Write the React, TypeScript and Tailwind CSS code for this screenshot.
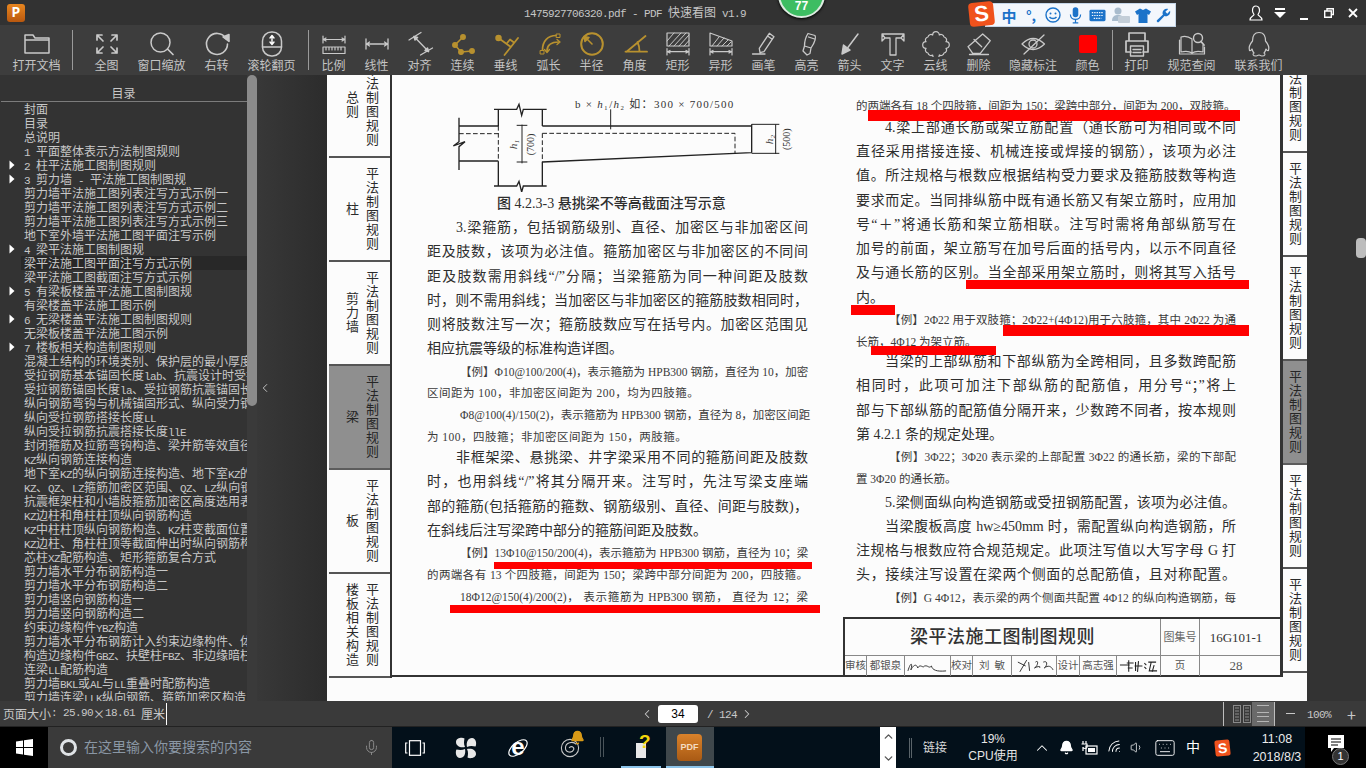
import type { ReactNode } from 'react';
import { Bell, ChevronDown, ChevronLeft, ChevronRight, ChevronUp, Keyboard, Mic, Volume1, Wifi } from 'lucide-react';

const tocRows: [string, boolean?, boolean?][] = [
  ['封面'], ['目录'], ['总说明'], ['1 平面整体表示方法制图规则'],
  ['2 柱平法施工图制图规则', true], ['3 剪力墙 - 平法施工图制图规', true],
  ['剪力墙平法施工图列表注写方式示例一'], ['剪力墙平法施工图列表注写方式示例二'], ['剪力墙平法施工图列表注写方式示例三'],
  ['地下室外墙平法施工图平面注写示例'], ['4 梁平法施工图制图规', true], ['梁平法施工图平面注写方式示例', false, true],
  ['梁平法施工图截面注写方式示例'], ['5 有梁板楼盖平法施工图制图规', true], ['有梁楼盖平法施工图示例'],
  ['6 无梁楼盖平法施工图制图规则', true], ['无梁板楼盖平法施工图示例'], ['7 楼板相关构造制图规则', true],
  ['混凝土结构的环境类别、保护层的最小厚度'], ['受拉钢筋基本锚固长度lab、抗震设计时受拉钢筋'], ['受拉钢筋锚固长度la、受拉钢筋抗震锚固长度'],
  ['纵向钢筋弯钩与机械锚固形式、纵向受力钢筋'], ['纵向受拉钢筋搭接长度LL'], ['纵向受拉钢筋抗震搭接长度llE'],
  ['封闭箍筋及拉筋弯钩构造、梁并筋等效直径'], ['KZ纵向钢筋连接构造'], ['地下室KZ的纵向钢筋连接构造、地下室KZ的'],
  ['KZ、QZ、LZ箍筋加密区范围、QZ、LZ纵向钢筋'], ['抗震框架柱和小墙肢箍筋加密区高度选用表'], ['KZ边柱和角柱柱顶纵向钢筋构造'],
  ['KZ中柱柱顶纵向钢筋构造、KZ柱变截面位置'], ['KZ边柱、角柱柱顶等截面伸出时纵向钢筋构造'], ['芯柱XZ配筋构造、矩形箍筋复合方式'],
  ['剪力墙水平分布钢筋构造一'], ['剪力墙水平分布钢筋构造二'], ['剪力墙竖向钢筋构造一'], ['剪力墙竖向钢筋构造二'],
  ['约束边缘构件YBZ构造'], ['剪力墙水平分布钢筋计入约束边缘构件、体'], ['构造边缘构件GBZ、扶壁柱FBZ、非边缘暗柱'],
  ['连梁LL配筋构造'], ['剪力墙BKL或AL与LL重叠时配筋构造'], ['剪力墙连梁LLK纵向钢筋、箍筋加密区构造'],
];

// l = body text, s = small example text, w = small text set wider; then first-line indent, unjustified, extra classes
type Line = [string, 'l' | 's' | 'w', boolean?, boolean?, string?];

const leftLines: Line[] = [
  ['3.梁箍筋，包括钢筋级别、直径、加密区与非加密区间', 'l', true],
  ['距及肢数，该项为必注值。箍筋加密区与非加密区的不同间', 'l'],
  ['距及肢数需用斜线“/”分隔；当梁箍筋为同一种间距及肢数', 'l'],
  ['时，则不需用斜线；当加密区与非加密区的箍筋肢数相同时，', 'l'],
  ['则将肢数注写一次；箍筋肢数应写在括号内。加密区范围见', 'l'],
  ['相应抗震等级的标准构造详图。', 'l', false, true],
  ['【例】Φ10@100/200(4)，表示箍筋为 HPB300 钢筋，直径为 10，加密', 's', true],
  ['区间距为 100，非加密区间距为 200，均为四肢箍。', 'w', false, true],
  ['Φ8@100(4)/150(2)，表示箍筋为 HPB300 钢筋，直径为 8，加密区间距', 's', true],
  ['为 100，四肢箍；非加密区间距为 150，两肢箍。', 'w', false, true],
  ['非框架梁、悬挑梁、井字梁采用不同的箍筋间距及肢数', 'l', true, false, '-mt-[2.5px]'],
  ['时，也用斜线“/”将其分隔开来。注写时，先注写梁支座端', 'l'],
  ['部的箍筋(包括箍筋的箍数、钢筋级别、直径、间距与肢数)，', 'l'],
  ['在斜线后注写梁跨中部分的箍筋间距及肢数。', 'l', false, true],
  ['【例】13Φ10@150/200(4)，表示箍筋为 HPB300 钢筋，直径为 10；梁', 's', true],
  ['的两端各有 13 个四肢箍，间距为 150；梁跨中部分间距为 200，四肢箍。', 's'],
  ['18Φ12@150(4)/200(2)，  表示箍筋为 HPB300 钢筋，  直径为 12；梁', 's', true],
];

const rightLines: Line[] = [
  ['的两端各有 18 个四肢箍，间距为 150；梁跨中部分，间距为 200，双肢箍。', 's', false, true, 'mt-[2px] -mb-[2px]'],
  ['4.梁上部通长筋或架立筋配置（通长筋可为相同或不同', 'l', true],
  ['直径采用搭接连接、机械连接或焊接的钢筋），该项为必注', 'l'],
  ['值。所注规格与根数应根据结构受力要求及箍筋肢数等构造', 'l'],
  ['要求而定。当同排纵筋中既有通长筋又有架立筋时，应用加', 'l'],
  ['号“＋”将通长筋和架立筋相联。注写时需将角部纵筋写在', 'l'],
  ['加号的前面，架立筋写在加号后面的括号内，以示不同直径', 'l'],
  ['及与通长筋的区别。当全部采用架立筋时，则将其写入括号', 'l'],
  ['内。', 'l', false, true],
  ['【例】2Φ22 用于双肢箍；2Φ22+(4Φ12)用于六肢箍，其中 2Φ22 为通', 's', true],
  ['长筋，4Φ12 为架立筋。', 's', false, true],
  ['当梁的上部纵筋和下部纵筋为全跨相同，且多数跨配筋', 'l', true, false, '-mt-[3.5px]'],
  ['相同时，此项可加注下部纵筋的配筋值，用分号“；”将上', 'l'],
  ['部与下部纵筋的配筋值分隔开来，少数跨不同者，按本规则', 'l'],
  ['第 4.2.1 条的规定处理。', 'l', false, true],
  ['【例】3Φ22；3Φ20 表示梁的上部配置 3Φ22 的通长筋，梁的下部配', 's', true],
  ['置 3Φ20 的通长筋。', 's', false, true],
  ['5.梁侧面纵向构造钢筋或受扭钢筋配置，该项为必注值。', 'l', true],
  ['当梁腹板高度 hw≥450mm 时，需配置纵向构造钢筋，所', 'l', true],
  ['注规格与根数应符合规范规定。此项注写值以大写字母 G 打', 'l'],
  ['头，接续注写设置在梁两个侧面的总配筋值，且对称配置。', 'l'],
  ['【例】G 4Φ12，表示梁的两个侧面共配置 4Φ12 的纵向构造钢筋，每', 's', true],
];

// half-width latin, the way the app's bitmap font draws it
function Mixed({ s }: { s: string }) {
  return (
    <>
      {s.split(/([\x20-\x7e]+)/).map((part, i) =>
        i % 2 ? (
          <span key={i} className="font-['Liberation_Mono',monospace] text-[11px] tracking-[-0.6px] whitespace-pre">{part}</span>
        ) : (
          <span key={i}>{part}</span>
        ),
      )}
    </>
  );
}

function Ico({ children, className = 'text-[#c9c9c9]' }: { children: ReactNode; className?: string }) {
  return (
    <svg viewBox="0 0 32 28" width="32" height="28" fill="none" stroke="currentColor" strokeWidth="1.5" strokeLinecap="round" strokeLinejoin="round" className={className}>
      {children}
    </svg>
  );
}

function Tool({ label, w = 'w-[43px]', children }: { label: string; w?: string; children: ReactNode }) {
  return (
    <div className={`${w} shrink-0 flex flex-col items-center pt-1`}>
      {children}
      <span className="text-[12px] leading-[15px] text-[#c4c4c4] whitespace-nowrap">{label}</span>
    </div>
  );
}

function Sep({ className }: { className: string }) {
  return <div className={`w-px h-[40px] mt-[5px] bg-[#9a9a9a] shrink-0 ${className}`} />;
}

const GOLD = 'text-[#b8912f]';

function DimLine() {
  return <path d="M5 22.7H27M5 19.5V26M27 19.5V26M8 21.5L5.5 22.7L8 24M24 21.5L26.5 22.7L24 24" strokeWidth="1.2" />;
}

function Toolbar() {
  return (
    <div className="h-[50px] bg-[#3d3d3d] flex pl-[3px] shrink-0">
      <Tool label="打开文档" w="w-[67px]">
        <Ico><path d="M4 24V6H12L14 9H28V24ZM4 11H28" /></Ico>
      </Tool>
      <Sep className="ml-[2px] mr-[12px]" />
      <Tool label="全图">
        <Ico><path d="M6 6L12 12M6 6V11M6 6H11M26 6L20 12M26 6V11M26 6H21M6 24L12 18M6 24V19M6 24H11M26 24L20 18M26 24V19M26 24H21" strokeWidth="1.7" /></Ico>
      </Tool>
      <Tool label="窗口缩放" w="w-[67px]">
        <Ico><circle cx="14.5" cy="13.5" r="9.5" /><path d="M21.5 20L27 25.5" strokeWidth="1.7" /></Ico>
      </Tool>
      <Tool label="右转">
        <Ico>
          <path d="M25 9.5A10.5 10.5 0 1 0 26.5 15" strokeWidth="1.6" />
          <path d="M22 8L28 5.5V12.5Z" fill="currentColor" />
        </Ico>
      </Tool>
      <Tool label="滚轮翻页" w="w-[67px]">
        <Ico>
          <rect x="6.5" y="3" width="19" height="24" rx="9" />
          <path d="M6.5 18H25.5" />
          <path d="M16 7V15M14 9L16 6.5L18 9M14 13L16 15.5L18 13" strokeWidth="1.4" stroke="#ffffff" />
        </Ico>
      </Tool>
      <Sep className="ml-[3px] mr-[3px]" />
      <Tool label="比例">
        <Ico>
          <path d="M5 7V14M27 7V14M5 10.5H27M8 9L5.5 10.5L8 12M24 9L26.5 10.5L24 12" strokeWidth="1.2" />
          <path d="M5 18H27V24.5H5ZM8 18V21M11 18V21M14 18V21M17 18V21M20 18V21M23 18V21" strokeWidth="1.2" />
        </Ico>
      </Tool>
      <Tool label="线性">
        <Ico><path d="M5 10V20M27 10V20M5 15H27M8.5 13L5.5 15L8.5 17M23.5 13L26.5 15L23.5 17" strokeWidth="1.3" /></Ico>
      </Tool>
      <Tool label="对齐">
        <Ico>
          <path d="M5 11L17 3.5M16.5 26L28.5 19M10 7.5L24.5 22.5" strokeWidth="1.3" />
          <path d="M10 7.5L13.5 8.5L11 11ZM24.5 22.5L21 21.5L23.5 19Z" fill="currentColor" />
        </Ico>
      </Tool>
      <Tool label="连续">
        <Ico className={GOLD}>
          <path d="M16 8L8 16L14 23L25 22" strokeWidth="1.6" />
          <circle cx="16" cy="8" r="2.2" fill="currentColor" />
          <circle cx="8" cy="16" r="2.2" fill="currentColor" />
          <circle cx="14" cy="23" r="2.2" fill="currentColor" />
          <circle cx="25" cy="22" r="2.2" fill="currentColor" />
        </Ico>
      </Tool>
      <Tool label="垂线">
        <Ico className={GOLD}>
          <circle cx="8.5" cy="9" r="2.5" fill="currentColor" />
          <path d="M28 9L14.5 26M8.5 9L21 18M17.5 13.5L20 10.5L24 13.5" strokeWidth="1.8" />
        </Ico>
      </Tool>
      <Tool label="弧长">
        <Ico className={GOLD}>
          <path d="M9.5 21C9.5 12 15 6.5 23 6.5M14 22C14 16.5 18 13 26 13" strokeWidth="1.7" />
          <rect x="7.5" y="21.5" width="3.5" height="3.5" strokeWidth="1" />
          <rect x="23.5" y="5" width="3.5" height="3.5" strokeWidth="1" />
          <path d="M11.5 20.5L14 23.5L16.5 20.5M24 10.5L27 13L24 15.5" strokeWidth="1.3" />
        </Ico>
      </Tool>
      <Tool label="半径">
        <Ico className={GOLD}>
          <circle cx="16" cy="15" r="10.8" strokeWidth="2" />
          <path d="M16 15L9.5 8.5" strokeWidth="1.6" />
          <path d="M8 7.5L13 8.5L9 12.5Z" fill="currentColor" />
        </Ico>
      </Tool>
      <Tool label="角度">
        <Ico className={GOLD}><path d="M6.5 22.7H28M7.5 22.7L26.5 7M18.5 13C20 16 20.5 19 20.5 22.7" strokeWidth="1.8" /></Ico>
      </Tool>
      <Tool label="矩形">
        <Ico>
          <rect x="5" y="4" width="22" height="13" strokeWidth="1.2" />
          <path d="M7 17L19 4M12 17L24 4M17 17L27 6M22 17L27 11.5M5 12L12 4" strokeWidth="1" />
          <DimLine />
        </Ico>
      </Tool>
      <Tool label="异形">
        <Ico>
          <path d="M5 4L27 12V17H5Z" strokeWidth="1.2" />
          <path d="M7 17L14 8M12 17L19 9M17 17L23 11M22 17L26 13" strokeWidth="1" />
          <DimLine />
        </Ico>
      </Tool>
      <Tool label="画笔">
        <Ico><path d="M21.3 4.3L26 7.7L16 22.7L12 23.7L11.3 19.3ZM19.5 7L24.3 10.3M4.5 25H17" strokeWidth="1.3" /></Ico>
      </Tool>
      <Tool label="高亮">
        <Ico><path d="M17 4.5L24 6.5C25.5 9 24 13 20 19L13.5 17C13.5 12 15 7.5 17 4.5ZM13.5 17L12 22L16 26L19 24.5L20 19M17.5 8L23.5 10" strokeWidth="1.3" /></Ico>
      </Tool>
      <Tool label="箭头">
        <Ico>
          <path d="M24 5L12 21" strokeWidth="1.5" />
          <path d="M8 25L9.5 16L16 21Z" fill="currentColor" />
        </Ico>
      </Tool>
      <Tool label="文字">
        <Ico><path d="M5 5H27V12L24 9H19V26H13V9H8L5 12ZM5 5L8 9M27 5L24 9" strokeWidth="1.3" /></Ico>
      </Tool>
      <Tool label="云线">
        <Ico><path d="M8 8a3 3 0 0 1 4.7-2 3 3 0 0 1 6.6 0 3 3 0 0 1 4.7 2 3 3 0 0 1 2 4.7 3 3 0 0 1 0 6.6 3 3 0 0 1-2 4.7 3 3 0 0 1-4.7 2 3 3 0 0 1-6.6 0 3 3 0 0 1-4.7-2 3 3 0 0 1-2-4.7 3 3 0 0 1 0-6.6 3 3 0 0 1 2-4.7z" strokeWidth="1.2" /></Ico>
      </Tool>
      <Tool label="删除">
        <Ico><path d="M19.7 5L27.3 11.7L17.3 24.3H9.7L5 17.7ZM11 10.5L18.7 17.7M6.5 25.5H25.5" strokeWidth="1.3" /></Ico>
      </Tool>
      <Tool label="隐藏标注" w="w-[66px]">
        <Ico>
          <path d="M5 15Q16 4 27.5 15Q16 26 5 15Z" strokeWidth="1.3" />
          <circle cx="16" cy="15" r="4" strokeWidth="1.3" />
          <path d="M7 25L27 6" strokeWidth="1.3" />
        </Ico>
      </Tool>
      <Tool label="颜色">
        <div className="w-[18px] h-[18px] mt-[6px] mb-1 rounded-[2px] bg-[#ff0000]" />
      </Tool>
      <Sep className="ml-[3px] mr-[2px]" />
      <Tool label="打印">
        <Ico>
          <path d="M8 12V4H24V12M5 23V12H27V23H22M10 23H5" strokeWidth="1.7" />
          <path d="M9.5 17H22.5V27H9.5ZM12 20.5H20M12 23.5H20" strokeWidth="1.4" />
        </Ico>
      </Tool>
      <Tool label="规范查阅" w="w-[67px]">
        <Ico>
          <path d="M16 10C12 7 8 7 5 8V23C9 22 13 22 16 24C19 22 23 22 27 23V16M16 10V24M3.5 11V25H28.5V18" strokeWidth="1.2" />
          <circle cx="22" cy="9" r="4.5" strokeWidth="1.4" />
          <path d="M25 12.5L28 16" strokeWidth="1.8" />
        </Ico>
      </Tool>
      <Tool label="联系我们" w="w-[67px]">
        <Ico><path d="M16 3.5C10.5 3.5 9.5 8 9.5 12C7 15 5.5 19 6.5 21.5C7.5 22 8.5 21 9 20C9.5 22 10 23 11 24C9.5 25 9.5 27 13 27C14.5 27 15.5 26 16 26C16.5 26 17.5 27 19 27C22.5 27 22.5 25 21 24C22 23 22.5 22 23 20C23.5 21 24.5 22 25.5 21.5C26.5 19 25 15 22.5 12C22.5 8 21.5 3.5 16 3.5Z" strokeWidth="1.2" /></Ico>
      </Tool>
    </div>
  );
}

function Sogou() {
  return (
    <div className="absolute left-[985px] top-[3px] w-[191px] h-[24px] bg-[#f3f7fc] border border-[#c5d6e8] flex items-center pl-3 text-[#1c73c9]">
      <div className="absolute left-[-17px] top-[-2px] w-[25px] h-[24px] -rotate-6 rounded-[4px] bg-[#f0521c] flex items-center justify-center text-white text-[22px] font-bold font-['Liberation_Sans',sans-serif] leading-none">S</div>
      <span className="w-[22px] text-center text-[15px] font-bold leading-none">中</span>
      <span className="w-[22px] text-center text-[14px] font-bold leading-none">°,</span>
      <div className="w-[22px] flex justify-center">
        <svg viewBox="0 0 16 16" width="16" height="16" fill="none" stroke="currentColor" strokeWidth="1.4"><circle cx="8" cy="8" r="7" /><circle cx="5.5" cy="6.5" r="1" fill="currentColor" stroke="none" /><circle cx="10.5" cy="6.5" r="1" fill="currentColor" stroke="none" /><path d="M4.5 10C6 12 10 12 11.5 10" /></svg>
      </div>
      <div className="w-[22px] flex justify-center">
        <svg viewBox="0 0 14 18" width="13" height="17" fill="currentColor"><rect x="4" y="0" width="6" height="11" rx="3" /><path d="M1.5 8C1.5 15 12.5 15 12.5 8M7 13V17M4 17H10" fill="none" stroke="currentColor" strokeWidth="1.3" /></svg>
      </div>
      <div className="w-[22px] flex justify-center">
        <svg viewBox="0 0 18 13" width="17" height="13"><rect x="0.5" y="0.5" width="17" height="12" rx="1.5" fill="currentColor" /><path d="M3 3.5H15M3 6.5H15M5 9.5H13" stroke="#f3f7fc" strokeWidth="1.2" strokeDasharray="1.5 1" /></svg>
      </div>
      <div className="w-[25px] flex justify-center">
        <svg viewBox="0 0 18 16" width="18" height="16" fill="#a9bccd"><circle cx="6" cy="4" r="3.5" /><path d="M0 14C0 9 3 8 6 8C9 8 12 9 12 14Z" /><rect x="6" y="9" width="12" height="7" rx="1" fill="#c3ced8" /></svg>
      </div>
      <div className="w-[19px] flex justify-center">
        <svg viewBox="0 0 16 15" width="16" height="15" fill="currentColor"><path d="M5 0.5L8 2L11 0.5L16 3.5L14 7L12.5 6V15H3.5V6L2 7L0 3.5Z" /></svg>
      </div>
      <div className="w-[23px] flex justify-center">
        <svg viewBox="0 0 16 16" width="15" height="15" fill="currentColor"><path d="M15 3L12 6L10 4L13 1C10 0 7 2 7 5C7 6 7 6.5 7.5 7L1 13C0 14 2 16 3 15L9 8.5C12 10 16 7 15 3Z" /></svg>
      </div>
    </div>
  );
}

function TitleBar() {
  return (
    <div className="relative h-[25px] bg-[#323232] flex items-center shrink-0">
      <div className="ml-[7px] w-[18px] h-[18px] rounded-[3px] bg-gradient-to-b from-[#e8861f] to-[#b9580f] flex items-center justify-center text-white text-[14px] font-bold font-['Liberation_Mono',monospace] leading-none">P</div>
      <div className="ml-[499px] text-[12px] text-[#c6c6c6] whitespace-nowrap"><Mixed s="1475927706320.pdf - PDF 快速看图 v1.9" /></div>
      <div className="ml-auto flex items-center text-white">
        <div className="w-[24px] flex justify-center">
          <svg viewBox="0 0 14 16" width="14" height="16" fill="none" stroke="currentColor" strokeWidth="1.2"><path d="M7 1C4.5 1 3.5 3 3.5 5.5C3.5 7.5 4.5 8.5 5 9.5C5 11 1 11.5 1 15H13C13 11.5 9 11 9 9.5C9.5 8.5 10.5 7.5 10.5 5.5C10.5 3 9.5 1 7 1Z" /></svg>
        </div>
        <div className="w-[24px] flex justify-center">
          <svg viewBox="0 0 12 10" width="12" height="10" fill="currentColor"><rect x="1" y="0" width="10" height="2" /><path d="M0 4H12L6 10Z" /></svg>
        </div>
        <div className="w-[24px] h-[14px] flex justify-center items-end"><div className="w-[8px] h-[2px] bg-white" /></div>
        <div className="w-[25px] flex justify-center">
          <svg viewBox="0 0 10 10" width="10" height="10" fill="none" stroke="currentColor" strokeWidth="1.4"><path d="M3 2.5V0.7H9.3V6.5H7.5M0.7 3H7.3V9.3H0.7Z" /></svg>
        </div>
        <div className="w-[24px] mr-[1px] flex justify-center">
          <svg viewBox="0 0 10 10" width="10" height="10" stroke="currentColor" strokeWidth="1.8"><path d="M1 1L9 9M9 1L1 9" /></svg>
        </div>
      </div>
      {/* floating score badge */}
      <div className="absolute left-[778px] top-[-29px] w-[47px] h-[47px] rounded-full bg-[#3dbd62] border-2 border-[#dcebe0] shadow-[0_1px_3px_#000] flex items-end justify-center pb-[3px] text-white text-[12px] font-bold font-['Liberation_Sans',sans-serif] leading-[14px]">77</div>
      <Sogou />
    </div>
  );
}

function Sidebar() {
  return (
    <div className="w-[247px] shrink-0 bg-[#333333] overflow-hidden">
      <div className="h-[27px] pt-[10px] text-center text-[12px] leading-[16px] text-[#c8c8c8] border-b border-[#7c7c7c] pr-[1px] ml-[1px]">目录</div>
      {tocRows.map(([text, arrow, active]) => (
        <div key={text} className="flex h-[14px] text-[12px] leading-[14px] text-[#c8c8c8] whitespace-nowrap">
          <div className="w-[21px] shrink-0 pl-[9px] pt-[2px]">
            {arrow && <svg viewBox="0 0 6 10" width="6" height="10" fill="#ffffff"><path d="M0.5 0.5L5.5 5L0.5 9.5Z" /></svg>}
          </div>
          <div className={active ? 'flex-1 min-w-0 pl-[3px] bg-[#282828]' : 'flex-1 min-w-0 pl-[3px]'}><Mixed s={text} /></div>
        </div>
      ))}
    </div>
  );
}

function Tab({ label, grey, right }: { label?: string; grey?: boolean; right?: boolean }) {
  const vertical = "[writing-mode:vertical-rl] text-[13px] leading-[20px] tracking-[1px] whitespace-nowrap";
  return (
    <div className={`h-[104px] shrink-0 flex items-center border-b-2 ${grey ? 'bg-[#8f8f8f] border-[#5c5c5c] text-[#262626]' : 'border-[#555555] text-[#2b2b2b]'} ${right ? 'justify-center' : 'pl-[13px]'}`}>
      {!right && <div className={`w-[20px] ${vertical}`}>{label}</div>}
      <div className={`w-[20px] ${vertical}`}>平法制图规则</div>
    </div>
  );
}

function PageLine({ line }: { line: Line }) {
  const [text, kind, indent, plain, extra = ''] = line;
  let size = 'h-[24.3px] leading-[24.3px] text-[14px]';
  if (kind === 's') size = 'h-[21.7px] leading-[21.7px] text-[11.5px] text-[#3a3a3a]';
  if (kind === 'w') size = 'h-[21.7px] leading-[21.7px] text-[11.5px] tracking-[0.5px] text-[#3a3a3a]';
  const pad = indent ? (kind === 'l' ? 'pl-[29px]' : 'pl-[33px]') : '';
  const align = plain ? '' : '[text-align-last:justify]';
  return <div className={`${size} ${pad} ${align} ${extra} whitespace-nowrap`}>{text}</div>;
}

function BeamFigure() {
  return (
    <svg viewBox="321 -3 1143 351" width="381" height="117" fill="none" stroke="#222222" strokeWidth="4" className="block">
      <path d="M522 100H590L597 85L605 118L610 100H680M535 100V150M667 100V150M535 258V330M667 258V330M522 330H590L597 316L605 348L610 330H680" />
      <path d="M417 125V197L400 210L435 197L417 212V282M417 150H535M417 255H535" />
      <path d="M667 150H1295M1295 145V230M667 258L1295 230" />
      <path d="M417 173H535M535 150V258M667 172H1245V232M667 172V258" strokeDasharray="14 7" strokeWidth="3" />
      <path d="M872 100V160M606 146V262M1367 145V234M590 148H622M590 258H622M1295 145H1378M1295 232H1378" strokeWidth="3" />
      <text x="765" y="97" fontSize="33" fill="#333333" stroke="none" fontFamily="'Liberation Serif','Noto Sans CJK SC',serif" textLength="475">b × <tspan fontStyle="italic">h</tspan>₁/<tspan fontStyle="italic">h</tspan>₂ 如：300 × 700/500</text>
      <text x="0" y="0" fontSize="34" fontStyle="italic" fill="#333333" stroke="none" fontFamily="'Liberation Serif',serif" transform="translate(592 220) rotate(-90)">h₁</text>
      <text x="0" y="0" fontSize="30" fill="#333333" stroke="none" fontFamily="'Liberation Serif',serif" transform="translate(642 238) rotate(-90)">(700)</text>
      <text x="0" y="0" fontSize="34" fontStyle="italic" fill="#333333" stroke="none" fontFamily="'Liberation Serif',serif" transform="translate(1360 205) rotate(-90)">h₂</text>
      <text x="0" y="0" fontSize="30" fill="#333333" stroke="none" fontFamily="'Liberation Serif',serif" transform="translate(1410 222) rotate(-90)">(500)</text>
    </svg>
  );
}

function TitleBlock() {
  const cell = 'flex items-center justify-center border-r border-[#888888] whitespace-nowrap';
  return (
    <div className="self-end w-[437px] h-[58px] border-t-2 border-l-2 border-[#333333] text-[#333333] flex flex-col">
      <div className="h-[37px] flex border-b border-[#888888]">
        <div className={`w-[316px] text-[18px] tracking-[0.5px] font-medium ${cell}`}>梁平法施工图制图规则</div>
        <div className={`w-[39px] text-[11px] text-[#666666] ${cell}`}>图集号</div>
        <div className="flex-1 text-center pr-[8px] text-[13px] leading-[37px] font-['Liberation_Serif',serif]">16G101-1</div>
      </div>
      <div className="flex-1 flex text-[10.5px] text-[#555555]">
        <div className={`w-[22px] ${cell}`}>审核</div>
        <div className={`w-[38px] ${cell}`}>都银泉</div>
        <div className={`w-[46px] ${cell}`}>
          <svg viewBox="0 0 46 18" width="46" height="18" fill="none" stroke="#333333" strokeWidth="1"><path d="M3 14C6 4 8 6 6 13C9 7 12 7 13 11C16 6 18 12 20 9C24 8 24 12 27 9C28 13 32 15 42 14" /></svg>
        </div>
        <div className={`w-[22px] ${cell}`}>校对</div>
        <div className={`w-[39px] ${cell}`}>刘&nbsp;&nbsp;敏</div>
        <div className={`w-[45px] ${cell}`}>
          <svg viewBox="0 0 45 18" width="45" height="18" fill="none" stroke="#333333" strokeWidth="1"><path d="M6 5L14 9M15 3L8 15M17 5L18 14M24 5C28 2 26 10 23 11C27 9 30 9 28 11M32 5C37 3 36 9 33 11C37 8 40 9 42 13" /></svg>
        </div>
        <div className={`w-[23px] ${cell}`}>设计</div>
        <div className={`w-[37px] ${cell}`}>高志强</div>
        <div className={`w-[44px] ${cell}`}>
          <svg viewBox="0 0 44 18" width="44" height="18" fill="none" stroke="#222222" strokeWidth="1.1"><path d="M3 8H13M12 3V15M10 6H17M11 11H16M19 5V14M18 9H26M22 4L21 15M28 6L30 8M28 10L30 12M32 5H40M35 5L33 14H41M38 8L36 15" /></svg>
        </div>
        <div className={`w-[39px] ${cell}`}>页</div>
        <div className="flex-1 text-center pr-[8px] text-[13px] font-['Liberation_Serif',serif]">28</div>
      </div>
    </div>
  );
}

function Page() {
  return (
    <div className="relative w-[980px] shrink-0 bg-[#fcfcfc] overflow-hidden flex items-start font-['Liberation_Serif','Noto_Sans_CJK_SC',serif] text-[#2e2e2e]">
      <div className="w-[65px] shrink-0 pl-[2px] -mt-[21px] flex flex-col font-['Noto_Sans_CJK_SC',sans-serif] border-r-2 border-[#333333]">
        <Tab label="总则" />
        <Tab label="柱" />
        <Tab label="剪力墙" />
        <Tab label="梁" grey />
        <Tab label="板" />
        <Tab label="楼板相关构造" />
      </div>
      <div className="w-[891px] h-[602px] shrink-0 flex flex-col border-b-2 border-r-[3px] border-[#333333]">
        <div className="flex-1 flex pl-[35px]">
          <div className="w-[381px] shrink-0">
            <BeamFigure />
            <div className="h-[24px] leading-[24px] pl-[70px] text-[14px] font-medium whitespace-nowrap">图 4.2.3-3  悬挑梁不等高截面注写示意</div>
            {leftLines.map((l) => <PageLine key={l[0]} line={l} />)}
          </div>
          <div className="w-[380px] ml-[48px] shrink-0 pt-[19px]">
            {rightLines.map((l) => <PageLine key={l[0]} line={l} />)}
          </div>
        </div>
        <TitleBlock />
      </div>
      <div className="w-[24px] shrink-0 -mt-[26px] flex flex-col font-['Noto_Sans_CJK_SC',sans-serif]">
        <Tab right />
        <Tab right />
        <Tab right />
        <Tab right grey />
        <Tab right />
        <Tab right />
      </div>
      {/* red pen marks drawn over the page */}
      <div className="absolute left-[167px] top-[487px] w-[318px] h-[7px] bg-[#ff0000]" />
      <div className="absolute left-[123px] top-[530px] w-[370px] h-[8px] bg-[#ff0000]" />
      <div className="absolute left-[541px] top-[35px] w-[372px] h-[11px] bg-[#ff0000]" />
      <div className="absolute left-[639px] top-[205px] w-[283px] h-[9px] bg-[#ff0000]" />
      <div className="absolute left-[524px] top-[230px] w-[44px] h-[10px] bg-[#ff0000]" />
      <div className="absolute left-[676px] top-[250px] w-[246px] h-[11px] bg-[#ff0000]" />
      <div className="absolute left-[544px] top-[271px] w-[125px] h-[9px] bg-[#ff0000]" />
    </div>
  );
}

function StatusBar() {
  return (
    <div className="h-[26px] bg-[#3a3a3a] border-b border-[#222222] flex items-center text-[#c8c8c8] text-[12px] shrink-0">
      <div className="w-[640px] pl-[3px] flex items-center whitespace-nowrap">
        <Mixed s="页面大小: 25.90×18.61 厘米" />
        <div className="w-px h-[22px] bg-white ml-[1px]" />
      </div>
      <ChevronLeft size={14} strokeWidth={1.8} />
      <div className="ml-[4px] w-[40px] h-[18px] rounded-[3px] bg-white text-black text-center leading-[18px] font-['Liberation_Sans',sans-serif]">34</div>
      <div className="ml-[9px] w-[28px] whitespace-pre"><Mixed s="/ 124" /></div>
      <ChevronRight size={14} strokeWidth={1.8} className="ml-[5px]" />
      <div className="ml-[469px] w-px h-[24px] bg-[#bdbdbd]" />
      <div className="ml-[7px] w-[21px] flex justify-center">
        <svg viewBox="0 0 18 18" width="18" height="18" fill="none" stroke="#8a8a8a"><rect x="0.5" y="0.5" width="7" height="17" /><rect x="10.5" y="0.5" width="7" height="17" /><path d="M2 3H6M2 6H6M2 9H6M2 12H6M2 15H6M12 3H16M12 6H16M12 9H16M12 12H16M12 15H16" /></svg>
      </div>
      <div className="w-[22px] h-[24px] bg-[#6a6a6a] flex flex-col gap-[3px] items-center justify-center">
        <div className="w-[12px] h-[8px] border-y border-[#b5b5b5]" />
        <div className="w-[12px] h-[6px] border-y border-[#b5b5b5]" />
      </div>
      <div className="w-px h-[24px] bg-[#bdbdbd]" />
      <div className="ml-[11px] w-[9px] h-px bg-[#c8c8c8]" />
      <div className="ml-[9px] w-[30px] whitespace-pre text-center"><Mixed s="100%" /></div>
      <div className="ml-[13px] text-[16px] leading-none">+</div>
    </div>
  );
}

function Taskbar() {
  return (
    <div className="h-[41px] bg-[#03101a] flex text-white flex-1 font-['Liberation_Sans','Noto_Sans_CJK_SC',sans-serif]">
      <div className="w-[48px] bg-black flex items-center justify-center">
        <svg viewBox="0 0 17 17" width="17" height="17" fill="#ffffff"><path d="M0 2.5L7 1.5V8H0ZM8 1.3L17 0V8H8ZM0 9H7V15.5L0 14.5ZM8 9H17V17L8 15.7Z" /></svg>
      </div>
      <div className="w-[344px] bg-[#3a3a3a] flex items-center pl-3 text-[14px] text-[#8a97a5]">
        <div className="w-[17px] h-[17px] rounded-full border-[3px] border-[#dfe3e6]" />
        <span className="ml-[7px]">在这里输入你要搜索的内容</span>
        <Mic size={17} strokeWidth={1.3} className="ml-[111px] text-[#8f8f8f]" />
      </div>
      <div className="w-[46px] flex items-center justify-center">
        <svg viewBox="0 0 20 16" width="20" height="16" fill="none" stroke="#ffffff" strokeWidth="1.2"><rect x="4.5" y="0.7" width="11" height="14.6" /><path d="M2.5 3H0.7V13H2.5M17.5 3H19.3V13H17.5" /></svg>
      </div>
      <div className="w-[56px] flex items-center justify-center">
        <svg viewBox="0 0 22 22" width="22" height="22" fill="#e8e8e8"><path d="M10 10C5 11 1 9 1 5C1 1 7 0 9.5 1.5C9 4 8.5 7 10 10ZM12 10C11 5 13 1 17 1C21 1 22 7 20.5 9.5C18 9 15 8.5 12 10ZM12 12C17 11 21 13 21 17C21 21 15 22 12.5 20.5C13 18 13.5 15 12 12ZM10 12C11 17 9 21 5 21C1 21 0 15 1.5 12.5C4 13 7 13.5 10 12Z" /></svg>
      </div>
      <div className="w-[48px] flex items-center justify-center">
        <svg viewBox="0 0 24 26" width="24" height="26" fill="none"><ellipse cx="12" cy="13" rx="11" ry="5.5" transform="rotate(-40 12 13)" stroke="#ffffff" strokeWidth="1.2" /><text x="12" y="20" textAnchor="middle" fontSize="24" fontWeight="700" fill="#ffffff" fontFamily="'Liberation Sans',sans-serif">e</text></svg>
      </div>
      <div className="relative w-[56px] flex items-center justify-center">
        <svg viewBox="0 0 22 22" width="20" height="20" fill="none" stroke="#c8c8c8" strokeWidth="1.2"><circle cx="11" cy="11" r="9.5" /><path d="M18 7C14 3 6 5 6 11C6 16 13 17 15 13C16 10 12 8 10 11" /></svg>
        <Bell size={15} fill="#d99a17" stroke="#d99a17" className="absolute left-[28px] top-[3px]" />
      </div>
      <div className="ml-[2px] mt-[10px] h-[20px] w-[4px] border-x border-[#4a545a]" />
      <div className="relative ml-[17px] w-[40px] flex items-center justify-center">
        <div className="w-[10px] h-[15px] mt-[6px] bg-[#e8e8e8]" />
        <span className="absolute left-[18px] top-[3px] text-[#f5d60a] text-[19px] font-bold leading-[24px]">?</span>
        <div className="absolute left-0 right-0 bottom-0 h-[2px] bg-[#8cc4ea]" />
      </div>
      <div className="relative ml-[5px] w-[48px] bg-[#3f474b] flex items-center pl-[11px]">
        <div className="w-[25px] h-[27px] rounded-[4px] bg-gradient-to-b from-[#d9822b] to-[#a95a14] text-[#f4dcc0] text-[9px] font-bold leading-[27px] text-center">PDF</div>
        <div className="absolute left-0 right-0 bottom-0 h-[2px] bg-[#8cc4ea]" />
      </div>
      <div className="ml-[166px] w-[16px] bg-white flex flex-col items-center justify-between py-[3px] text-[#555555]">
        <ChevronUp size={13} strokeWidth={2.5} />
        <ChevronDown size={13} strokeWidth={2.5} />
      </div>
      <div className="ml-[13px] mt-[11px] h-[20px] w-[3px] border-x border-[#5a646a]" />
      <div className="ml-[11px] w-[24px] self-center text-[12px] text-[#d8d8d8] whitespace-nowrap">链接</div>
      <div className="ml-[16px] w-[60px] text-center text-[12px] leading-[17px] pt-[4px] text-[#e6e6e6] whitespace-nowrap">
        <div>19%</div>
        <div>CPU使用</div>
      </div>
      <div className="ml-[8px] w-[22px] flex items-center justify-center"><ChevronUp size={18} strokeWidth={1.4} /></div>
      <div className="ml-[1px] w-[24px] flex items-center justify-center"><Bell size={15} fill="#ffffff" /></div>
      <div className="w-[22px] flex items-center justify-center">
        <svg viewBox="0 0 18 14" width="18" height="14" fill="none" stroke="#ffffff" strokeWidth="1.2"><path d="M3 0V3M6 0V3M1.5 3H7V6C7 8 3 8 3 6V10" /><rect x="6" y="5" width="11" height="8" /><rect x="8" y="7" width="7" height="4" fill="#ffffff" stroke="none" /></svg>
      </div>
      <div className="w-[30px] flex items-center justify-center"><Wifi size={17} strokeWidth={1.4} className="-rotate-45" /></div>
      <div className="w-[14px] flex items-center justify-center"><Volume1 size={17} strokeWidth={1.3} /></div>
      <div className="w-[42px] flex items-center justify-center"><Keyboard size={22} strokeWidth={1} /></div>
      <div className="w-[14px] flex items-center justify-center text-[14px]">中</div>
      <div className="w-[44px] flex items-center justify-center">
        <div className="w-[15px] h-[16px] -rotate-6 rounded-[2px] bg-[#f0521c] text-white text-[14px] font-bold leading-[16px] text-center">S</div>
      </div>
      <div className="ml-[5px] w-[56px] text-center text-[12.5px] leading-[18px] pt-[3px] text-[#ececec] whitespace-nowrap">
        <div>11:08</div>
        <div>2018/8/3</div>
      </div>
      <div className="relative flex-1 bg-black flex justify-center pt-[8px]">
        <svg viewBox="0 0 16 17" width="16" height="17" fill="#ffffff"><path d="M0 0H16V13H6L3 17V13H0Z" /><path d="M3 4H13M3 7H13M3 10H10" stroke="#000000" /></svg>
        <div className="absolute left-[27px] top-[21px] w-[17px] h-[17px] rounded-full bg-[#333333] border border-[#777777] text-center text-[11px] leading-[15px]">1</div>
      </div>
    </div>
  );
}

export default function App() {
  return (
    <div className="w-[1366px] h-[768px] overflow-hidden flex flex-col bg-[#333333] font-['Noto_Sans_CJK_SC',sans-serif]">
      <TitleBar />
      <Toolbar />
      <div className="h-[626px] flex shrink-0 overflow-hidden">
        <Sidebar />
        <div className="w-[10px] shrink-0 bg-[#3a3a3a]">
          <div className="h-[331px] rounded-b-[5px] rounded-t-[5px] bg-[#8b8b8b]" />
        </div>
        <div className="w-[70px] shrink-0 flex items-center pl-[1px] text-[#c8c8c8] bg-gradient-to-r from-[#383838] to-[#2c2c2c]">
          <ChevronLeft size={14} strokeWidth={1.6} />
        </div>
        <Page />
        <div className="flex-1 flex justify-end pt-[163px]">
          <div className="w-[10px] h-[20px] rounded-[4px] bg-[#bdbdbd]" />
        </div>
      </div>
      <StatusBar />
      <Taskbar />
    </div>
  );
}
